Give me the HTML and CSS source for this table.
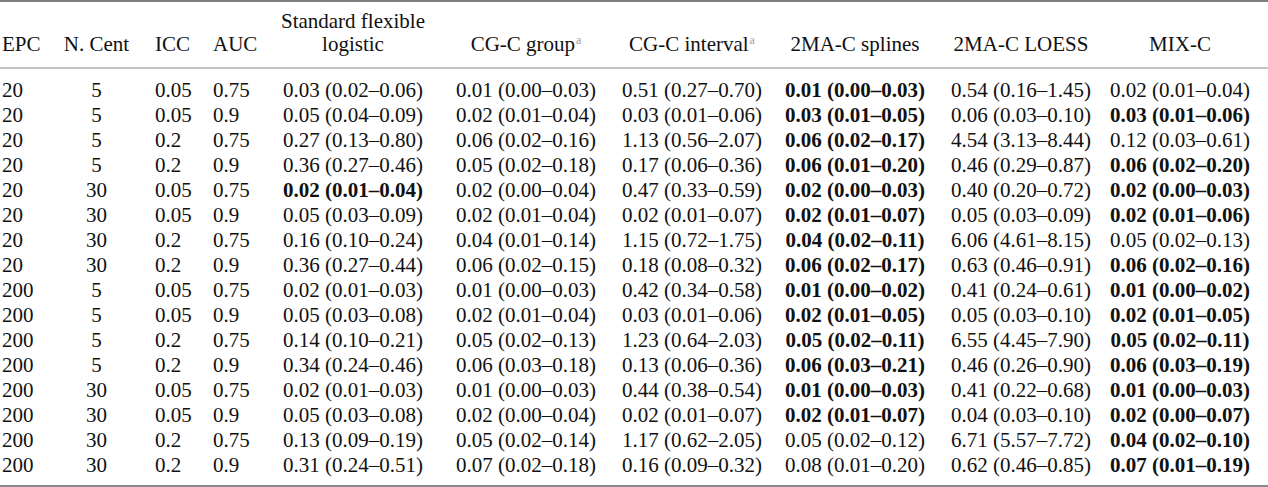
FILE: index.html
```html
<!DOCTYPE html>
<html lang="en">
<head>
<meta charset="utf-8">
<title>Table</title>
<link rel="stylesheet" href="styles.css">
</head>
<body>
<table class="results">
  <colgroup>
    <col class="c-epc"><col class="c-cent"><col class="c-icc"><col class="c-auc">
    <col class="c-sfl"><col class="c-grp"><col class="c-int"><col class="c-spl"><col class="c-loe"><col class="c-mix">
  </colgroup>
  <thead>
    <tr>
      <th class="l first">EPC</th>
      <th>N. Cent</th>
      <th class="l icc">ICC</th>
      <th class="l">AUC</th>
      <th>Standard flexible<br>logistic</th>
      <th>CG-C group<sup class="note">a</sup></th>
      <th>CG-C interval<sup class="note">a</sup></th>
      <th>2MA-C splines</th>
      <th>2MA-C LOESS</th>
      <th class="last">MIX-C</th>
    </tr>
  </thead>
  <tbody>
    <tr><td class="l first">20</td><td>5</td><td class="l icc">0.05</td><td class="l">0.75</td><td>0.03 (0.02–0.06)</td><td>0.01 (0.00–0.03)</td><td>0.51 (0.27–0.70)</td><td class="b">0.01 (0.00–0.03)</td><td>0.54 (0.16–1.45)</td><td class="last">0.02 (0.01–0.04)</td></tr>
    <tr><td class="l first">20</td><td>5</td><td class="l icc">0.05</td><td class="l">0.9</td><td>0.05 (0.04–0.09)</td><td>0.02 (0.01–0.04)</td><td>0.03 (0.01–0.06)</td><td class="b">0.03 (0.01–0.05)</td><td>0.06 (0.03–0.10)</td><td class="last b">0.03 (0.01–0.06)</td></tr>
    <tr><td class="l first">20</td><td>5</td><td class="l icc">0.2</td><td class="l">0.75</td><td>0.27 (0.13–0.80)</td><td>0.06 (0.02–0.16)</td><td>1.13 (0.56–2.07)</td><td class="b">0.06 (0.02–0.17)</td><td>4.54 (3.13–8.44)</td><td class="last">0.12 (0.03–0.61)</td></tr>
    <tr><td class="l first">20</td><td>5</td><td class="l icc">0.2</td><td class="l">0.9</td><td>0.36 (0.27–0.46)</td><td>0.05 (0.02–0.18)</td><td>0.17 (0.06–0.36)</td><td class="b">0.06 (0.01–0.20)</td><td>0.46 (0.29–0.87)</td><td class="last b">0.06 (0.02–0.20)</td></tr>
    <tr><td class="l first">20</td><td>30</td><td class="l icc">0.05</td><td class="l">0.75</td><td class="b">0.02 (0.01–0.04)</td><td>0.02 (0.00–0.04)</td><td>0.47 (0.33–0.59)</td><td class="b">0.02 (0.00–0.03)</td><td>0.40 (0.20–0.72)</td><td class="last b">0.02 (0.00–0.03)</td></tr>
    <tr><td class="l first">20</td><td>30</td><td class="l icc">0.05</td><td class="l">0.9</td><td>0.05 (0.03–0.09)</td><td>0.02 (0.01–0.04)</td><td>0.02 (0.01–0.07)</td><td class="b">0.02 (0.01–0.07)</td><td>0.05 (0.03–0.09)</td><td class="last b">0.02 (0.01–0.06)</td></tr>
    <tr><td class="l first">20</td><td>30</td><td class="l icc">0.2</td><td class="l">0.75</td><td>0.16 (0.10–0.24)</td><td>0.04 (0.01–0.14)</td><td>1.15 (0.72–1.75)</td><td class="b">0.04 (0.02–0.11)</td><td>6.06 (4.61–8.15)</td><td class="last">0.05 (0.02–0.13)</td></tr>
    <tr><td class="l first">20</td><td>30</td><td class="l icc">0.2</td><td class="l">0.9</td><td>0.36 (0.27–0.44)</td><td>0.06 (0.02–0.15)</td><td>0.18 (0.08–0.32)</td><td class="b">0.06 (0.02–0.17)</td><td>0.63 (0.46–0.91)</td><td class="last b">0.06 (0.02–0.16)</td></tr>
    <tr><td class="l first">200</td><td>5</td><td class="l icc">0.05</td><td class="l">0.75</td><td>0.02 (0.01–0.03)</td><td>0.01 (0.00–0.03)</td><td>0.42 (0.34–0.58)</td><td class="b">0.01 (0.00–0.02)</td><td>0.41 (0.24–0.61)</td><td class="last b">0.01 (0.00–0.02)</td></tr>
    <tr><td class="l first">200</td><td>5</td><td class="l icc">0.05</td><td class="l">0.9</td><td>0.05 (0.03–0.08)</td><td>0.02 (0.01–0.04)</td><td>0.03 (0.01–0.06)</td><td class="b">0.02 (0.01–0.05)</td><td>0.05 (0.03–0.10)</td><td class="last b">0.02 (0.01–0.05)</td></tr>
    <tr><td class="l first">200</td><td>5</td><td class="l icc">0.2</td><td class="l">0.75</td><td>0.14 (0.10–0.21)</td><td>0.05 (0.02–0.13)</td><td>1.23 (0.64–2.03)</td><td class="b">0.05 (0.02–0.11)</td><td>6.55 (4.45–7.90)</td><td class="last b">0.05 (0.02–0.11)</td></tr>
    <tr><td class="l first">200</td><td>5</td><td class="l icc">0.2</td><td class="l">0.9</td><td>0.34 (0.24–0.46)</td><td>0.06 (0.03–0.18)</td><td>0.13 (0.06–0.36)</td><td class="b">0.06 (0.03–0.21)</td><td>0.46 (0.26–0.90)</td><td class="last b">0.06 (0.03–0.19)</td></tr>
    <tr><td class="l first">200</td><td>30</td><td class="l icc">0.05</td><td class="l">0.75</td><td>0.02 (0.01–0.03)</td><td>0.01 (0.00–0.03)</td><td>0.44 (0.38–0.54)</td><td class="b">0.01 (0.00–0.03)</td><td>0.41 (0.22–0.68)</td><td class="last b">0.01 (0.00–0.03)</td></tr>
    <tr><td class="l first">200</td><td>30</td><td class="l icc">0.05</td><td class="l">0.9</td><td>0.05 (0.03–0.08)</td><td>0.02 (0.00–0.04)</td><td>0.02 (0.01–0.07)</td><td class="b">0.02 (0.01–0.07)</td><td>0.04 (0.03–0.10)</td><td class="last b">0.02 (0.00–0.07)</td></tr>
    <tr><td class="l first">200</td><td>30</td><td class="l icc">0.2</td><td class="l">0.75</td><td>0.13 (0.09–0.19)</td><td>0.05 (0.02–0.14)</td><td>1.17 (0.62–2.05)</td><td>0.05 (0.02–0.12)</td><td>6.71 (5.57–7.72)</td><td class="last b">0.04 (0.02–0.10)</td></tr>
    <tr><td class="l first">200</td><td>30</td><td class="l icc">0.2</td><td class="l">0.9</td><td>0.31 (0.24–0.51)</td><td>0.07 (0.02–0.18)</td><td>0.16 (0.09–0.32)</td><td>0.08 (0.01–0.20)</td><td>0.62 (0.46–0.85)</td><td class="last b">0.07 (0.01–0.19)</td></tr>
  </tbody>
</table>
</body>
</html>
```

FILE: styles.css
```css
html, body {
  margin: 0;
  padding: 0;
  background: #ffffff;
}

body {
  font-family: "Liberation Serif", "Times New Roman", serif;
  color: #111111;
}

.results {
  width: 1268px;
  border-collapse: collapse;
  table-layout: fixed;
  border-top: 2px solid #808080;
  border-bottom: 2px solid #8a8a8a;
  font-family: "Liberation Serif", "Times New Roman", serif;
}

.c-epc { width: 55px; }
.c-cent { width: 83px; }
.c-icc { width: 75px; }
.c-auc { width: 53px; }
.c-sfl { width: 174px; }
.c-grp { width: 172px; }
.c-int { width: 160px; }
.c-spl { width: 166px; }
.c-loe { width: 166px; }
.c-mix { width: 164px; }

.results th {
  font-family: "Liberation Serif", "Times New Roman", serif;
  font-weight: normal;
  font-size: 21px;
  line-height: 23px;
  text-align: center;
  vertical-align: bottom;
  padding: 8px 0 11px 0;
  border-bottom: 2px solid #c4c4c4;
  white-space: nowrap;
}

.results td {
  font-family: "Liberation Serif", "Times New Roman", serif;
  font-size: 21px;
  line-height: 25px;
  text-align: center;
  padding: 0;
  white-space: nowrap;
}

.results tbody tr:first-child td { padding-top: 9px; }
.results tbody tr:last-child td { padding-bottom: 7px; }

.results .l { text-align: left; }
.results .first { padding-left: 2px; }
.results .icc { padding-left: 17px; }
.results .last { padding-right: 12px; }
.results td.b { font-weight: bold; }

.note {
  font-size: 12px;
  color: #9a9a9a;
  line-height: 0;
  vertical-align: 7px;
  margin-left: 1px;
}
```
